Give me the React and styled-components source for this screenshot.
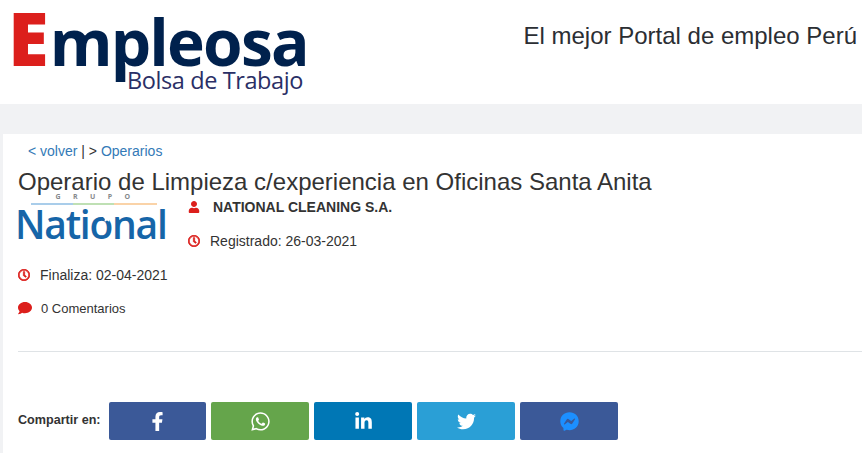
import React from 'react';
import styled, { createGlobalStyle } from 'styled-components';
import { FaUser, FaRegClock, FaComment, FaFacebookF, FaWhatsapp, FaLinkedinIn, FaTwitter, FaFacebookMessenger, FaStar } from 'react-icons/fa';

const Global = createGlobalStyle`
  html, body { margin: 0; padding: 0; background: #f1f2f4; overflow: hidden; }
  body { font-family: "Liberation Sans", Arial, sans-serif; color: #333; }
`;

const Page = styled.div`
  width: 862px;
  height: 453px;
  overflow: hidden;
`;

const Header = styled.header`
  height: 104px;
  background: #fff;
  display: flex;
  justify-content: space-between;
  padding: 0 5px 0 8px;
  box-sizing: border-box;
`;

const Logo = styled.div`
  position: relative;
  width: 301px;
  height: 92px;
  font-family: "Open Sans", sans-serif;
  font-weight: 700;
  color: #00214d;
  white-space: nowrap;
`;

const LogoWord = styled.div`
  display: flex;
  align-items: baseline;
  padding-top: 5px;
  font-size: 64px;
  line-height: 66px;
  letter-spacing: -1.8px;
`;

const LogoInitial = styled.span`
  color: #dc1f1c;
  font-size: 74px;
  font-weight: 800;
  letter-spacing: 1px;
`;

const LogoSub = styled.span`
  position: absolute;
  left: 119px;
  top: 65px;
  font-size: 23.5px;
  line-height: 30px;
  font-weight: 400;
  color: #2a2f66;
  letter-spacing: -0.4px;
`;

const Tagline = styled.div`
  font-size: 24px;
  line-height: 28px;
  color: #2b2e33;
  padding-top: 22px;
`;

const Card = styled.main`
  margin: 30px 0 0 3px;
  background: #fff;
  padding: 0 0 0 15px;
  height: 319px;
`;

const Breadcrumb = styled.div`
  font-size: 14px;
  line-height: 20px;
  padding: 7px 0 0 10px;
  color: #333;
`;

const Crumb = styled.a`
  color: #337ab7;
  text-decoration: none;
`;

const Title = styled.h1`
  margin: 7px 0 0;
  font-size: 24px;
  line-height: 28px;
  font-weight: 400;
  color: #333;
`;

const CompanyRow = styled.div`
  display: flex;
  height: 69px;
`;

const CompanyLogo = styled.div`
  width: 151px;
  margin-right: 19px;
  margin-top: -3px;
  display: flex;
  flex-direction: column;
  flex: none;
`;

const GroupLabel = styled.div`
  font-family: "Open Sans", sans-serif;
  font-size: 7px;
  line-height: 8px;
  font-weight: 700;
  color: #85888b;
  letter-spacing: 12.4px;
  text-align: center;
  padding-left: 11px;
  height: 10px;
`;

const GroupLine = styled.div`
  height: 2px;
  margin: 0 12px 0 13px;
  background: linear-gradient(90deg, #a9cdea 0 33%, #bfe0b4 33% 66%, #fad3a8 66% 100%);
`;

const CompanyMark = styled.div`
  position: relative;
  font-family: "Open Sans", sans-serif;
  font-size: 39px;
  line-height: 37px;
  font-weight: 600;
  color: #1665a8;
  letter-spacing: -1.25px;
  margin-left: -3px;
  white-space: nowrap;
`;

const MarkStar = styled.span`
  position: absolute;
  left: 88px;
  top: 9px;
  display: flex;
  font-size: 8px;
  color: #fff;
`;

const CompanyInfo = styled.div`
  display: flex;
  flex-direction: column;
`;

const Line = styled.div`
  display: flex;
  align-items: center;
  height: 20px;
  font-size: ${p => p.$size || 14}px;
  font-weight: ${p => (p.$bold ? 700 : 400)};
  color: #333;
  margin-top: ${p => p.$top || 0}px;
  white-space: nowrap;
`;

const Icon = styled.span`
  display: flex;
  width: ${p => p.$w || 22}px;
  flex: none;
  color: #dc1f1c;
  font-size: ${p => p.$size || 12}px;
  svg { stroke: currentColor; stroke-width: ${p => p.$stroke || 0}; }
`;

const Divider = styled.hr`
  border: 0;
  border-top: 1px solid #dfe3e6;
  margin: 33px 0 0;
`;

const ShareRow = styled.div`
  display: flex;
  align-items: center;
  gap: 5px;
  margin-top: 50px;
`;

const ShareLabel = styled.span`
  width: 86px;
  margin-bottom: 2px;
  font-size: 12.6px;
  font-weight: 700;
  color: #333;
`;

const ShareButton = styled.a`
  width: ${p => p.$w || 98}px;
  height: 38px;
  display: flex;
  align-items: center;
  justify-content: center;
  border-radius: 2px;
  background: ${p => p.$bg};
  color: ${p => p.$fg || '#fff'};
  font-size: ${p => p.$size || 19}px;
`;

export default function App() {
  return (
    <Page>
      <Global />
      <Header>
        <Logo>
          <LogoWord><LogoInitial>E</LogoInitial>mpleosa</LogoWord>
          <LogoSub>Bolsa de Trabajo</LogoSub>
        </Logo>
        <Tagline>El mejor Portal de empleo Perú</Tagline>
      </Header>
      <Card>
        <Breadcrumb>
          <Crumb>&lt; volver</Crumb> | &gt; <Crumb>Operarios</Crumb>
        </Breadcrumb>
        <Title>Operario de Limpieza c/experiencia en Oficinas Santa Anita</Title>
        <CompanyRow>
          <CompanyLogo>
            <GroupLabel>GRUPO</GroupLabel>
            <GroupLine />
            <CompanyMark>National<MarkStar><FaStar /></MarkStar></CompanyMark>
          </CompanyLogo>
          <CompanyInfo>
            <Line $bold $top={1}><Icon $w={25}><FaUser /></Icon>NATIONAL CLEANING S.A.</Line>
            <Line $top={14}><Icon $stroke={30}><FaRegClock /></Icon>Registrado: 26-03-2021</Line>
          </CompanyInfo>
        </CompanyRow>
        <Line><Icon $stroke={30}><FaRegClock /></Icon>Finaliza: 02-04-2021</Line>
        <Line $size={13} $top={13}><Icon $w={23} $size={14}><FaComment /></Icon>0 Comentarios</Line>
        <Divider />
        <ShareRow>
          <ShareLabel>Compartir en:</ShareLabel>
          <ShareButton $bg="#3b5998" $w={97}><FaFacebookF /></ShareButton>
          <ShareButton $bg="#65a54b" $size={21}><FaWhatsapp /></ShareButton>
          <ShareButton $bg="#0077b5"><FaLinkedinIn /></ShareButton>
          <ShareButton $bg="#2a9fd6"><FaTwitter /></ShareButton>
          <ShareButton $bg="#3b5998" $fg="#1c8fff"><FaFacebookMessenger /></ShareButton>
        </ShareRow>
      </Card>
    </Page>
  );
}
